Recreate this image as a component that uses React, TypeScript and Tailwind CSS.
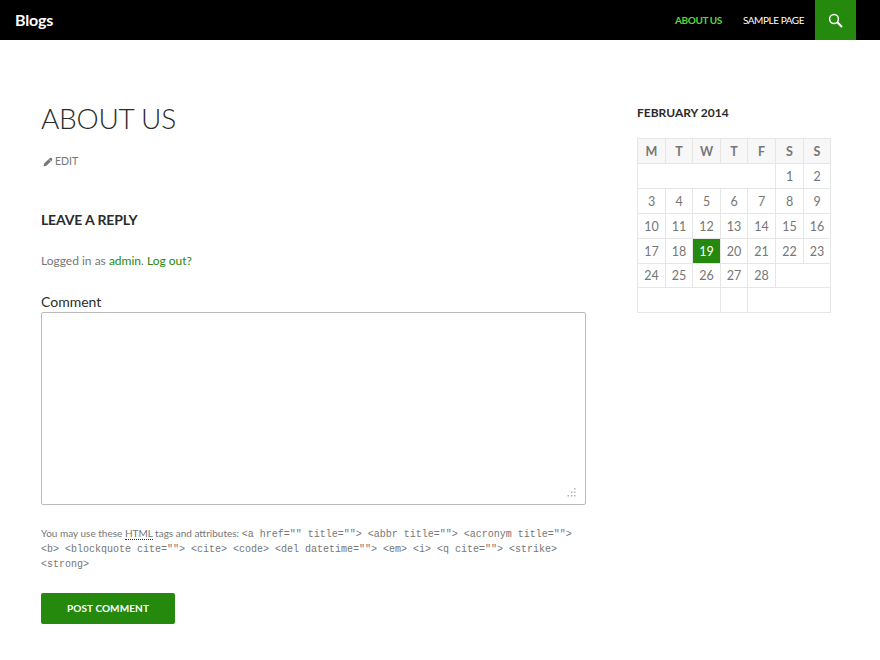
import React from 'react';

const weekdays = ['M', 'T', 'W', 'T', 'F', 'S', 'S'];
const cellClass = 'border border-[#e6e6e6] p-0 pt-px h-[25px] text-center align-middle';

function DayCell({ day, active }: { day: number; active?: boolean }) {
  return (
    <td className={`${cellClass} ${active ? 'bg-[#24890d] text-white' : ''}`}>{day}</td>
  );
}

function Calendar() {
  const rows = [
    [3, 4, 5, 6, 7, 8, 9],
    [10, 11, 12, 13, 14, 15, 16],
    [17, 18, 19, 20, 21, 22, 23],
  ];
  return (
    <table className="w-[193px] table-fixed border-collapse border border-[#e6e6e6] text-[12.5px] leading-[18px] text-[#767676] ml-px">
      <colgroup>
        <col className="w-[28px]" />
        <col className="w-[27px]" />
        <col className="w-[28px]" />
        <col className="w-[27px]" />
        <col className="w-[28px]" />
        <col className="w-[28px]" />
        <col className="w-[27px]" />
      </colgroup>
      <thead>
        <tr>
          {weekdays.map((d, i) => (
            <th key={`wd_${i}`} className={`${cellClass} bg-[#f7f7f7] font-bold text-[#767676]`}>
              {d}
            </th>
          ))}
        </tr>
      </thead>
      <tbody>
        <tr>
          <td colSpan={5} className={cellClass}></td>
          <DayCell day={1} />
          <DayCell day={2} />
        </tr>
        {rows.map((row, i) => (
          <tr key={`row_${i}`}>
            {row.map((d) => (
              <DayCell key={d} day={d} active={d === 19} />
            ))}
          </tr>
        ))}
        <tr className="h-[24px]">
          {[24, 25, 26, 27, 28].map((d) => (
            <td key={d} className="border border-[#e6e6e6] p-0 pt-px h-[24px] text-center align-middle">
              {d}
            </td>
          ))}
          <td colSpan={2} className="border border-[#e6e6e6] p-0 h-[24px]"></td>
        </tr>
        <tr>
          <td colSpan={3} className={cellClass}></td>
          <td className={cellClass}></td>
          <td colSpan={3} className={cellClass}></td>
        </tr>
      </tbody>
    </table>
  );
}

export default function App() {
  return (
    <div className="min-h-[660px] bg-white font-['Lato','Liberation_Sans',sans-serif] text-[#2b2b2b]">
      <header className="flex h-10 items-center justify-between bg-black">
        <a className="pl-[15px] text-[16px] font-bold tracking-[-0.2px] text-white">Blogs</a>
        <nav className="flex h-full items-center">
          <a className="text-[10px] font-bold uppercase tracking-[-0.4px] text-[#55d737]">About Us</a>
          <a className="ml-[21px] text-[10px] uppercase tracking-[-0.45px] text-white">Sample Page</a>
          <div className="ml-[11px] mr-[24px] flex h-full w-[41px] items-center justify-center bg-[#24890d]">
            <svg width="15" height="15" viewBox="0 0 15 15" fill="none" stroke="#ffffff">
              <circle cx="6" cy="6" r="4.4" strokeWidth="1.5" />
              <path d="M9.3 9.3 L14 14" strokeWidth="2" />
            </svg>
          </div>
        </nav>
      </header>

      <div className="flex pl-[41px]">
        <main className="w-[545px]">
          <h1 className="mt-[60px] text-[28px] font-light uppercase leading-[36px] tracking-[-0.25px]">About Us</h1>
          <div className="mt-[20px] flex h-[12px] items-center text-[10.5px] uppercase text-[#767676]">
            <svg width="10" height="10" viewBox="0 0 10 10" fill="#767676" className="ml-[2px] mr-[2px]">
              <path d="M0.5 9.5 L1.2 6.6 L6.8 1 Q7.6 0.3 8.4 1 L9 1.6 Q9.7 2.4 9 3.2 L3.4 8.8 Z" />
              <path d="M6 2.4 L7.6 4" stroke="#ffffff" strokeWidth="0.7" fill="none" />
            </svg>
            <span>Edit</span>
          </div>
          <h2 className="mt-[43px] text-[14px] font-bold uppercase leading-[18px] tracking-[-0.15px]">Leave a Reply</h2>
          <p className="mt-[23px] text-[12px] leading-[18px] text-[#767676]">
            Logged in as <a className="text-[#24890d]">admin</a>. <a className="text-[#24890d]">Log out?</a>
          </p>
          <label className="mt-[23px] block pb-[2px] text-[14px] leading-[17px]">Comment</label>
          <div className="relative">
            <textarea
              readOnly
              className="block h-[193px] w-[545px] resize-none rounded-[2px] border border-[#bbbbbb] bg-white"
            />
            <svg width="10" height="10" viewBox="0 0 10 10" fill="#b3b3b3" className="absolute bottom-[7px] right-[9px]">
              <rect x="7" y="0" width="1.5" height="1.5" />
              <rect x="4" y="3.5" width="1.5" height="1.5" />
              <rect x="7" y="3.5" width="1.5" height="1.5" />
              <rect x="0.5" y="7" width="1.5" height="1.5" />
              <rect x="4" y="7" width="1.5" height="1.5" />
              <rect x="7" y="7" width="1.5" height="1.5" />
            </svg>
          </div>
          <p className="mt-[21px] text-[10px] leading-[15px] text-[#767676]">
            You may use these{' '}
            <abbr className="border-b border-dotted border-[#2b2b2b] text-[#767676] no-underline">HTML</abbr> tags and attributes:{' '}
            <code className="font-['Liberation_Mono',monospace] leading-[12px]">
              &lt;a href="" title=""&gt; &lt;abbr title=""&gt; &lt;acronym title=""&gt; &lt;b&gt; &lt;blockquote
              cite=""&gt; &lt;cite&gt; &lt;code&gt; &lt;del datetime=""&gt; &lt;em&gt; &lt;i&gt; &lt;q cite=""&gt;
              &lt;strike&gt; &lt;strong&gt;
            </code>
          </p>
          <button className="mt-[22px] h-[31px] w-[134px] rounded-[2px] bg-[#24890d] text-[10px] font-bold uppercase tracking-[0.1px] text-white">
            Post Comment
          </button>
        </main>

        <aside className="ml-[51px] w-[194px]">
          <h3 className="mt-[64px] text-[12px] font-bold uppercase leading-[18px]">February 2014</h3>
          <div className="mt-[16px] -ml-px">
            <Calendar />
          </div>
        </aside>
      </div>
    </div>
  );
}
